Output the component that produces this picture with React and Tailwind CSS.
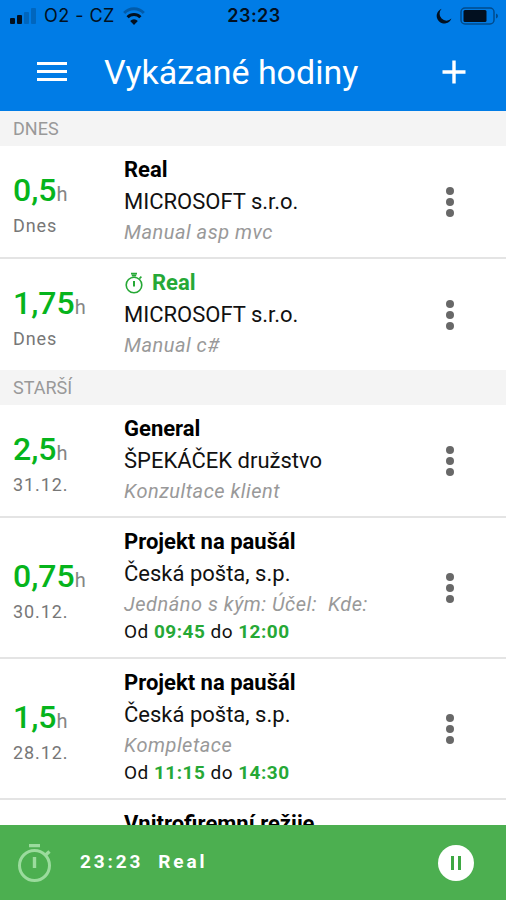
import { useState } from "react";

const SECTIONS = [
  {
    title: "DNES",
    items: [
      { id: 1, hours: "0,5", day: "Dnes", project: "Real", client: "MICROSOFT s.r.o.", note: "Manual asp mvc" },
      { id: 2, hours: "1,75", day: "Dnes", project: "Real", client: "MICROSOFT s.r.o.", note: "Manual c#", running: true },
    ],
  },
  {
    title: "STARŠÍ",
    items: [
      { id: 3, hours: "2,5", day: "31.12.", project: "General", client: "ŠPEKÁČEK družstvo", note: "Konzultace klient" },
      {
        id: 4,
        hours: "0,75",
        day: "30.12.",
        project: "Projekt na paušál",
        client: "Česká pošta, s.p.",
        note: "Jednáno s kým: Účel:  Kde:",
        from: "09:45",
        to: "12:00",
      },
      {
        id: 5,
        hours: "1,5",
        day: "28.12.",
        project: "Projekt na paušál",
        client: "Česká pošta, s.p.",
        note: "Kompletace",
        from: "11:15",
        to: "14:30",
      },
      { id: 6, project: "Vnitrofiremní režije" },
    ],
  },
];

function SignalIcon() {
  return (
    <svg width="26" height="18" viewBox="0 0 26 18" aria-hidden="true">
      <rect x="0" y="11" width="5" height="6" rx="1" />
      <rect x="7" y="8" width="5" height="9" rx="1" />
      <rect x="14" y="5" width="5" height="12" rx="1" opacity="0.2" />
      <rect x="21" y="1" width="5" height="16" rx="1" opacity="0.2" />
    </svg>
  );
}

function WifiIcon() {
  return (
    <svg width="22" height="18" viewBox="0 0 22 18" fill="none" stroke="currentColor" strokeWidth="3" aria-hidden="true">
      <path d="M1.2 6a13.5 13.5 0 0 1 19.6 0" opacity="0.3" />
      <path d="M4.6 10.2a8.8 8.8 0 0 1 12.8 0" />
      <path d="M11 18l-3.8-4a5.2 5.2 0 0 1 7.6 0z" fill="currentColor" stroke="none" />
    </svg>
  );
}

function MoonIcon() {
  return (
    <svg width="16" height="16" viewBox="0 0 16 16" fill="currentColor" aria-hidden="true">
      <path d="M5.6.8A7.6 7.6 0 1 0 15.4 10.6 6.9 6.9 0 0 1 5.6.8z" />
    </svg>
  );
}

function BatteryIcon() {
  return (
    <svg width="38" height="18" viewBox="0 0 38 18" aria-hidden="true">
      <rect x="1" y="1" width="33" height="16" rx="4" fill="none" stroke="currentColor" strokeWidth="1.5" opacity="0.45" />
      <rect x="3.5" y="3" width="23" height="12" rx="1.5" />
      <path d="M36 6.5q2 .8 2 2.5t-2 2.5z" opacity="0.45" />
    </svg>
  );
}

function StopwatchSmall() {
  return (
    <svg width="20" height="22" viewBox="0 0 20 22" fill="none" stroke="currentColor" strokeWidth="1.6" aria-hidden="true">
      <circle cx="10" cy="13" r="7.8" />
      <path d="M7 1.6h6M7.8 3.6h4.4M15.4 6.6l2-2" />
      <path d="M10 9v5.4" strokeWidth="2" />
    </svg>
  );
}

function StopwatchLarge() {
  return (
    <svg width="34" height="40" viewBox="0 0 34 40" fill="none" stroke="currentColor" strokeWidth="3" aria-hidden="true">
      <circle cx="16.5" cy="22.5" r="15" />
      <path d="M11 2.6h11M16.5 14v11M27.5 12l4-3.6" strokeWidth="3.4" />
    </svg>
  );
}

function Entry({ item }) {
  return (
    <li className="flex items-center border-b-2 border-[#e4e4e4] px-[13px] last:border-b-0">
      <div className="w-[111px] shrink-0 pt-2">
        {item.hours && (
          <>
            <p className="text-[32px] leading-10 font-medium text-[#06b41c]">
              {item.hours}
              <span className="text-xl font-normal text-[#858585]">h</span>
            </p>
            <p className="text-lg leading-8 tracking-wider text-[#777]">{item.day}</p>
          </>
        )}
      </div>
      <div className="min-w-0 flex-1 pt-2 pb-[11px]">
        <h3
          className={
            item.running
              ? "flex items-center gap-2 text-[22px] leading-8 font-bold text-[#26a836]"
              : "text-[22px] leading-8 font-bold text-black"
          }
        >
          {item.running && <StopwatchSmall />}
          {item.project}
        </h3>
        {item.client && <p className="text-[22px] leading-8 text-[#111]">{item.client}</p>}
        {item.note && (
          <p className="text-xl leading-7 tracking-wide whitespace-pre text-[#999] italic">{item.note}</p>
        )}
        {item.from && (
          <p className="text-[19px] leading-7 tracking-wide text-[#111]">
            Od <b className="text-[#26a836]">{item.from}</b> do <b className="text-[#26a836]">{item.to}</b>
          </p>
        )}
      </div>
      {item.hours && (
        <button
          type="button"
          aria-label="Možnosti"
          className="mr-[19px] flex h-12 w-12 flex-col items-center justify-center gap-[3px] text-[#686868]"
        >
          <span className="h-2 w-2 rounded-full bg-current" />
          <span className="h-2 w-2 rounded-full bg-current" />
          <span className="h-2 w-2 rounded-full bg-current" />
        </button>
      )}
    </li>
  );
}

export default function App() {
  const [paused, setPaused] = useState(false);

  return (
    <div className="flex h-screen flex-col overflow-hidden bg-white font-['Roboto',sans-serif]">
      <header className="shrink-0 bg-[#007ce6]">
        <div className="grid h-8 grid-cols-[1fr_auto_1fr] items-center pr-2 pl-[10px] font-['Inter',sans-serif] text-lg tracking-wide text-[#021020]">
          <div className="flex items-center gap-2 fill-current">
            <SignalIcon />
            <span>O2 - CZ</span>
            <WifiIcon />
          </div>
          <span className="font-semibold">23:23</span>
          <div className="flex items-center justify-end gap-2 fill-current">
            <MoonIcon />
            <BatteryIcon />
          </div>
        </div>
        <div className="flex h-[79px] items-center px-7 text-white">
          <button type="button" aria-label="Menu" className="flex h-12 w-12 flex-col items-center justify-center gap-[5px]">
            <span className="h-[3px] w-[30px] bg-white" />
            <span className="h-[3px] w-[30px] bg-white" />
            <span className="h-[3px] w-[30px] bg-white" />
          </button>
          <h1 className="ml-7 flex-1 text-[34px] leading-10">Vykázané hodiny</h1>
          <button type="button" aria-label="Přidat" className="flex h-12 w-12 items-center justify-center">
            <svg width="24" height="24" viewBox="0 0 24 24" stroke="currentColor" strokeWidth="3.4" aria-hidden="true">
              <path d="M12 .5v23M.5 12h23" />
            </svg>
          </button>
        </div>
      </header>

      <main className="min-h-0 flex-1 overflow-hidden">
        {SECTIONS.map((section) => (
          <section key={section.title}>
            <h2 className="bg-[#f4f4f4] px-[13px] text-lg leading-[35px] text-[#999]">{section.title}</h2>
            <ul>
              {section.items.map((item) => (
                <Entry key={item.id} item={item} />
              ))}
            </ul>
          </section>
        ))}
      </main>

      <footer className="flex h-[75px] shrink-0 items-center bg-[#4caf50] px-[18px] text-white">
        <span className="text-[#9bdb9d]">
          <StopwatchLarge />
        </span>
        <p className="ml-7 flex-1 text-[19px] font-bold tracking-[0.15em] whitespace-pre">23:23  Real</p>
        <button
          type="button"
          aria-label={paused ? "Pokračovat" : "Pozastavit"}
          onClick={() => setPaused(!paused)}
          className="mr-[14px] flex h-9 w-9 items-center justify-center gap-1 rounded-full bg-white"
        >
          <span className="h-[14px] w-[3px] bg-[#3ea843]" />
          <span className="h-[14px] w-[3px] bg-[#3ea843]" />
        </button>
      </footer>
    </div>
  );
}
